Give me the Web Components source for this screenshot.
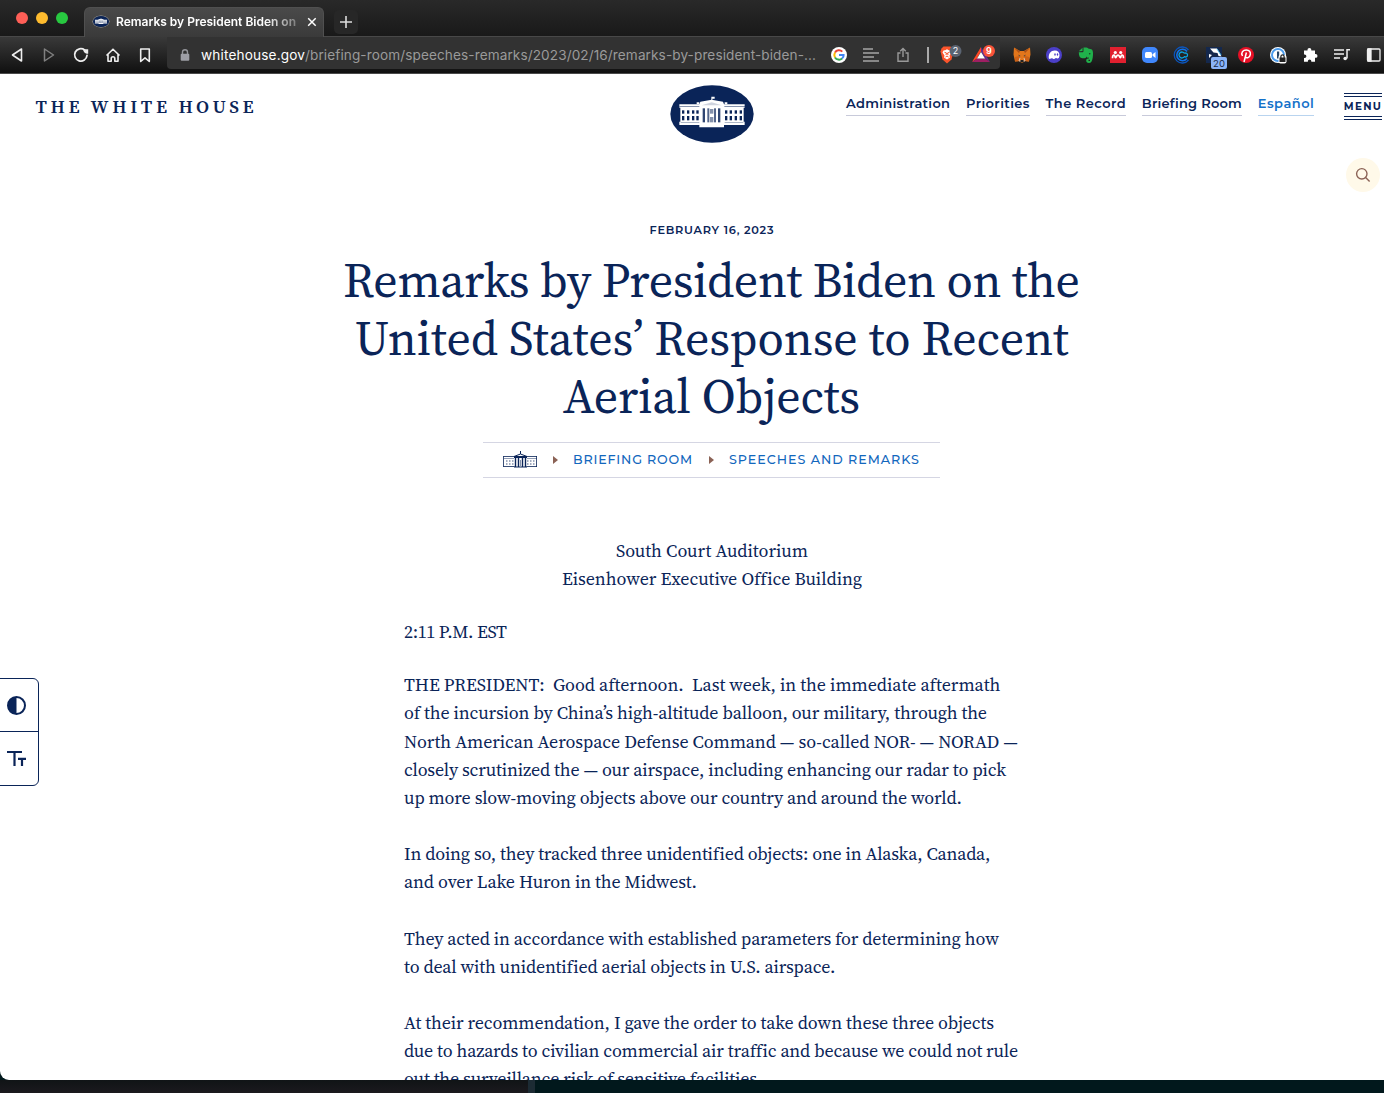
<!DOCTYPE html>
<html lang="en">
<head>
<meta charset="utf-8">
<title>Remarks by President Biden on the United States’ Response to Recent Aerial Objects</title>
<style>
html,body{margin:0;height:100%;overflow:hidden;background:#17161c}
body{--serif:'Source Serif 4','Source Serif Pro','Lora','Merriweather','Liberation Serif',serif}
</style>
</head>
<body>
<app-window></app-window>
<script>
const def = (name, html, after) => customElements.define(name, class extends HTMLElement {
  connectedCallback() {
    if (this.shadowRoot) return;
    const root = this.attachShadow({ mode: 'open' });
    root.innerHTML = typeof html === 'function' ? html(this) : html;
    if (after) after(this, root);
  }
});

// A single line of text, tracked to a requested measure.
def('fit-line', `<style>:host{display:block;white-space:pre;width:max-content}span{display:inline-block}</style><span><slot></slot></span>`,
  (el, root) => {
    const s = root.querySelector('span');
    const w = parseFloat(el.getAttribute('w'));
    s.style.letterSpacing = '0px';
    const natural = s.getBoundingClientRect().width;
    const n = el.textContent.length;
    const ls = (w - natural) / (n - 1);
    s.style.letterSpacing = ls + 'px';
    s.style.marginRight = -ls + 'px';
  });

const windows = () => {
  let r = '';
  for (const x of [96, 111, 126, 139, 225, 239, 254, 269])
    for (const y of [102, 119]) r += `<rect x="${x}" y="${y}" width="7" height="${y > 110 ? 13 : 10}"/>`;
  return r;
};
const building = (fg, bg) => `
<g fill="${fg}">
<path d="M88 84h60l3-8 34-6 34 6 3 8h62v10h-3v42h3v10h-62v7h-74v-7H88v-10h3V94h-3z"/>
<path d="M184 61h10v6h-7v6h-3zM140 78h8v6h-8zM224 78h8v6h-8z"/></g>
<g fill="${bg}">${windows()}
<rect x="88" y="89" width="60" height="1.500"/><rect x="223" y="89" width="62" height="1.500"/>
<path d="M155 87l30-9 30 9z" opacity=".2"/>
<rect x="158" y="96" width="7" height="42" opacity=".85"/><rect x="172" y="96" width="6" height="42" opacity=".7"/><rect x="192" y="96" width="6" height="42" opacity=".7"/><rect x="204" y="96" width="7" height="42" opacity=".85"/>
<rect x="180" y="98" width="10" height="14" opacity=".5"/><rect x="180" y="122" width="10" height="16" opacity=".5"/>
<rect x="92" y="138" width="56" height="2" opacity=".5"/><rect x="224" y="138" width="56" height="2" opacity=".5"/></g>`;

def('wh-emblem', `<style>:host{display:block;width:84px;height:58px}svg{display:block;width:100%;height:100%}</style>
<svg viewBox="60 26 252 174"><ellipse cx="186" cy="113" rx="125" ry="86" fill="#0a2458"/>${building('#fff', '#0a2458')}</svg>`);

def('wh-mini', `<style>:host{display:block;width:35px;height:17px;margin-top:-2px}svg{display:block;width:100%;height:100%}</style>
<svg viewBox="0 0 35 17" fill="none" stroke="#0a2458"><path d="M.5 5.500h11M23 5.500h11M.5 15.500h11M23.500 15.500h10.500M.5 5v11M33.500 5v11" stroke-width="1" opacity=".8"/>
<path d="M1 7.500h10M24 7.500h10" stroke-width="1" opacity=".45"/><path d="M3 10h8M24 10h8M3 13h8M24 13h8" stroke-width="1.500" opacity=".5" stroke-dasharray="1.500 1.500"/>
<path d="M11 5.500l6.500-2.500 6.500 2.500zM17.500 0v3M11 6.500h13M11 16h13" stroke-width="1"/><path d="M12.500 6v10M15.500 6v10M19.500 6v10M22.500 6v10" stroke-width="1.400"/><path d="M17.500 9v6" opacity=".5"/></svg>`);

def('tab-strip', `<style>
:host{display:flex;height:37px;background:linear-gradient(#292929,#191919);box-sizing:border-box;border-bottom:1px solid #484848;color:#fff;font:600 12px Inter,sans-serif}
.lights{display:flex;gap:8px;padding:12px 16px 0 16px;flex:none}
.lights i{width:12px;height:12px;border-radius:50%}
.tab{box-sizing:border-box;width:240px;height:30px;margin-top:7px;padding:0 6px 2px 8px;display:flex;align-items:center;border-radius:6px 6px 0 0;background:linear-gradient(#4a4a4a,#3a3a3a);border:1px solid #505050;border-bottom:0}
.tab wh-emblem{width:16px;height:11px;border-radius:50%;box-shadow:0 0 0 .5px #aaa}
.title{width:181px;margin-left:7px;overflow:hidden;-webkit-mask:linear-gradient(90deg,#000 82%,rgba(0,0,0,.3));mask:linear-gradient(90deg,#000 82%,rgba(0,0,0,.3));line-height:16px}
.x{margin-left:10px}.plus{width:24px;height:24px;margin:10px 0 0 10px;border-radius:5px;background:#272727;display:block}
</style>
<div class="lights"><i style="background:#fe5f57"></i><i style="background:#febb2e"></i><i style="background:#28c840"></i></div>
<div class="tab"><wh-emblem></wh-emblem><div class="title"><fit-line w="180">Remarks by President Biden on</fit-line></div>
<svg class="x" width="10" height="10" stroke="#fff" stroke-width="1.500"><path d="M1.200 1.200l7.500 7.500M8.700 1.200L1.200 8.700"/></svg></div>
<svg class="plus" viewBox="0 0 24 24" stroke="#ddd" stroke-width="1.600"><path d="M12 6v12M6 12h12"/></svg>`);

def('tool-bar', `<style>
:host{display:flex;align-items:center;height:37px;box-sizing:border-box;border-bottom:1px solid #4a4a4a;background:linear-gradient(#393939,#101010);color:#fff;font:13.600px Inter,Roboto,sans-serif}
svg{display:block;flex:none}
.nav{display:flex;gap:12px;padding-left:7px;width:160px;box-sizing:border-box}
.addr{display:flex;align-items:center;width:833px;box-sizing:border-box;height:32px;border-radius:0 0 4px 4px;background:#323232;align-self:flex-start;padding:4px 0 0 12px;margin-left:7px}
.url{display:flex;margin-left:10px;width:616px}
.path{color:#9a9a9a}
.in{display:flex;gap:12px;margin-left:12px}
.sep{width:1.500px;height:16px;background:#aaa;margin:0 11px 0 14px}
.sh{display:flex;gap:6px;margin-left:-2px}
.ext{display:flex;gap:12px;margin-left:12px}
text{font-family:Inter,sans-serif}
</style>
<div class="nav">
<svg width="20" height="20" fill="none" stroke="#eee" stroke-width="1.600"><path d="M14.500 4v12L5.500 10z" stroke-linejoin="round"/></svg>
<svg width="20" height="20" fill="none" stroke="#808080" stroke-width="1.500"><path d="M5.500 4v12l9-6z" stroke-linejoin="round"/></svg>
<svg width="20" height="20" fill="none" stroke="#eee" stroke-width="1.800"><path d="M13.600 4.900A6.200 6.200 0 1 0 16 10.500" stroke-linecap="round"/><path d="M12 4.200h5.200v4.500c-1.700 0-3-.5-3.800-1.300-.8-.8-1.200-1.900-1.400-3.200z" fill="#eee" stroke="none"/></svg>
<svg width="20" height="20" fill="none" stroke="#eee" stroke-width="1.600"><path d="M3.500 10.500L10 4.200l6.500 6.300M5 9.500v6.700h3.200v-2.700a1.800 1.800 0 0 1 3.600 0v2.700H15V9.500" stroke-linejoin="round"/></svg>
<svg width="20" height="20" fill="none" stroke="#eee" stroke-width="1.600"><path d="M5.700 4h8.600v12.500L10 12.800l-4.300 3.700z" stroke-linejoin="round"/></svg>
</div>
<div class="addr">
<svg width="12" height="14" fill="none"><path d="M3.500 7V4.300a2.500 2.500 0 0 1 5 0V7" stroke="#95969b" stroke-width="1.400"/><rect x="1.700" y="5.800" width="8.600" height="7" rx="1" fill="#9d9ea5"/></svg>
<div class="url"><fit-line w="104">whitehouse.gov</fit-line><fit-line class="path" w="511">/briefing-room/speeches-remarks/2023/02/16/remarks-by-president-biden-...</fit-line></div>
<div class="in">
<svg width="20" height="20" fill="none" stroke-width="2"><circle cx="10" cy="10" r="8" fill="#fff"/><path d="M13.300 6.600A4.700 4.700 0 0 0 6 7.600" stroke="#ea4335"/><path d="M6 7.600a4.700 4.700 0 0 0 0 4.800" stroke="#fbbc05"/><path d="M6 12.400a4.700 4.700 0 0 0 7.100 1.100" stroke="#34a853"/><path d="M13.100 13.500c1-.8 1.600-2 1.500-3.500H10" stroke="#4285f4"/></svg>
<svg width="20" height="20" stroke="#a5a5a5" stroke-width="1.500"><path d="M2 4h10M2 8h16M2 12h11M2 16h16"/></svg>
<svg width="20" height="20" fill="none" stroke="#999" stroke-width="1.400"><path d="M7.500 8H5v8.300h10V8h-2.500M10 12V3.500M7.200 6.200L10 3.500l2.800 2.700"/></svg>
</div><i class="sep"></i>
<div class="sh">
<svg width="24" height="22"><path d="M3.500 4.500l2-2h7l2 2 1 3-2 8L9 19.500 4.500 15.500l-2-8z" fill="#fb542b"/><path d="M5.500 6.500L8 6l1-1 1 1 2.500.5 1 2-2 3 .5 2-3 2-3-2 .5-2-2-3z" fill="#fff"/><path d="M6.500 8.300l2 .7-.5 2M11.500 8.300l-2 .7.5 2M7.500 13l1.500-1 1.500 1" stroke="#fb542b" fill="none"/><rect x="11.500" y="1" width="12" height="12" rx="6" fill="#5b6472"/><text x="17.500" y="10.200" text-anchor="middle" font-size="9" fill="#fff">2</text></svg>
<svg width="28" height="22"><g transform="translate(2 0)"><path d="M11 3L2 18l5-3.500 4-7.200z" fill="#ff4724"/><path d="M11 3l9 15-5-3.500-4-7.200z" fill="#662d91"/><path d="M2 18h18l-5-3.500H7z" fill="#9e1f63"/><path d="M11 8l4 6.500H7z" fill="#fff"/><rect x="13" y="1" width="12" height="12" rx="6" fill="#f9533a"/><text x="19" y="10.200" text-anchor="middle" font-size="9" font-weight="600" fill="#fff">9</text></g></svg>
</div></div>
<div class="ext">
<svg width="20" height="20"><path d="M2 2.500l6 3.500h4l6-3.500.5 7-1.500 7-4.500-.5-1.500 1.500H9L7.500 16 3 16.500l-1.500-7z" fill="#e2761b"/><path d="M2 3l5 5 1-2zM18 3l-5 5-1-2z" fill="#a85018"/><path d="M3 12l4-1 1 5-5 .5zM17 12l-4-1-1 5 5 .5z" fill="#cd6116"/><path d="M6 9.500l2.500 1.500-1 .5zM14 9.500L11.500 11l1 .5z" fill="#233447"/><path d="M8.500 15h3l.5 2H8z" fill="#222"/><path d="M8 13l-1 3h1.500M12 13l1 3h-1.500" stroke="#d7c1b3" fill="none"/></svg>
<svg width="20" height="20"><circle cx="10" cy="10" r="8" fill="#4b3fc8"/><path d="M4.800 13.500c-.5-5 2-8 6-8 3 0 4.700 2 4.700 4.700 0 2-.9 3.300-2 3.300-.8 0-1-.6-1.500-.6-.8 0-1.200 1.100-2.400 1.100-1 0-1.100-.7-1.800-.7-.9 0-1.700 1.200-3 .2z" fill="#fff"/><ellipse cx="11" cy="9.500" rx=".7" ry="1.200" fill="#4b3fc8"/><ellipse cx="13.500" cy="9.500" rx=".7" ry="1.200" fill="#4b3fc8"/></svg>
<svg width="20" height="20"><path d="M7.500 2.500h3c1.200 0 1.700 1 1.700 1l3 .7c1.800.4 2.300 4 1.500 8.500-.6 3.500-1.500 5.300-3.800 5.300-2 0-2.700-.9-2.700-2.500 0-1.300.8-2 2-2h.7l-.1-.9-1.500.1-.5-1.200c-.6 1.500-2 2-4.500 1.800-2.400-.2-3.500-2-3.500-6h4l.7-.8z" fill="#20b04b"/><path d="M2.800 6.300L6.500 2.700v3.200z" fill="#20b04b"/><circle cx="13.700" cy="8.700" r=".8" fill="#183d23"/><path d="M12.500 14.700h1.500v1.300h-1.500z" fill="#222"/></svg>
<svg width="20" height="20"><path d="M2 2h16v16H2z" fill="#e1202f"/><circle cx="7.300" cy="7.500" r="1.600" fill="#fff"/><circle cx="12.700" cy="7.500" r="1.600" fill="#fff"/><path d="M4.500 13.200c0-2 .5-3 1.500-3 1.500 0 .7 2.500 1.500 2.500S8.500 10.200 10 10.200s1.700 2.500 2.500 2.500 0-2.500 1.500-2.500c1 0 1.500 1 1.500 3" stroke="#fff" stroke-width="1.700" fill="none"/></svg>
<svg width="20" height="20"><rect x="2" y="2" width="16" height="16" rx="5" fill="#4087fc"/><rect x="5" y="7" width="7" height="6" rx="1.500" fill="#fff"/><path d="M12.500 9.300L15.500 7v6l-3-2.300z" fill="#fff"/></svg>
<svg width="20" height="20" fill="none"><path d="M16.500 5A8 8 0 1 0 16.500 15" stroke="#0b55bd" stroke-width="1.300"/><path d="M15 6.500A5.700 5.700 0 1 0 15 13.500" stroke="#1072ed" stroke-width="1.600"/><path d="M12.500 8.300a3 3 0 1 0 0 3.400c1.600.7 3 0 3-1.700s-1.400-2.400-3-1.700" stroke="#0ba5e5" stroke-width="1.300"/></svg>
<svg width="22" height="20" style="overflow:visible"><g transform="translate(0 -4)"><path d="M2 6h16v16H2z" fill="#14284d"/><path d="M6 7.500h7l4.500 8-3-.5-1-3-4-.5zM5 13l3 1-3 3z" fill="#fff"/><path d="M13 8l4 6" stroke="#58bff0"/><rect x="7" y="16" width="16" height="12" rx="2" fill="#8ab4f8"/><text x="15" y="25.500" text-anchor="middle" font-size="9.500" fill="#1b2c4b">20</text></g></svg>
<svg width="20" height="20" style="margin-left:-2px"><circle cx="10" cy="10" r="8" fill="#e60f25"/><path d="M10.400 7.500L8 17M6.500 11c-2-3.500.5-6 3.800-6 3 0 4.500 2 4 4.500-.6 3.500-3.800 4-4.900 2.300" stroke="#fff" stroke-width="1.500" fill="none"/></svg>
<svg width="20" height="20"><circle cx="10" cy="10" r="8" fill="#fff"/><circle cx="10" cy="10" r="6" fill="none" stroke="#4b9ced" stroke-width="2"/><path d="M9 6.500h2.200v7H9z" fill="#244466"/><rect x="10.500" y="10" width="8" height="8.500" rx="2" fill="#fff"/><path d="M11.500 12.500h6V17h-6z" fill="#222"/><path d="M12.900 13v-1.500a1.600 1.600 0 0 1 3.200 0V13" stroke="#222" stroke-width="1.200" fill="none"/></svg>
<svg width="20" height="20"><path d="M4 5.500h3.500v-.7a1.900 1.900 0 0 1 3.800 0v.7H15V9h.6a1.900 1.900 0 0 1 0 3.800H15v4h-3.700v-.7a1.700 1.700 0 0 0-3.400 0v.7H4V13h.7a1.700 1.700 0 0 0 0-3.400H4z" fill="#fff"/></svg>
<svg width="20" height="20" fill="none" stroke="#eee" stroke-width="1.500"><path d="M2 5h10M2 9h10M2 13h6M15 13.500V4.800h3"/><circle cx="13.200" cy="13.500" r="1.800" fill="#eee" stroke="none"/></svg>
<svg width="20" height="20" fill="none" stroke="#eee" stroke-width="1.300"><rect x="3.500" y="4" width="12.500" height="12" rx="1"/><path d="M4 4h3v12H4z" fill="#eee"/></svg>
</div>`);

def('nav-link', `<style>:host{display:block;color:var(--c,#0a2458);border-bottom:1px solid var(--b,#c8cada);height:24px;line-height:24px;font-weight:600}</style><slot></slot>`);

def('site-header', `<style>
:host{display:flex;height:106px;color:#0a2458;font:600 13px/24px Montserrat,Inter,sans-serif}
.brand{padding:21px 0 0 35.500px;font:600 18.500px/24px var(--serif);width:670px;box-sizing:border-box;flex:none}
wh-emblem{margin-top:11px;flex:none}
nav{display:flex;gap:16px;padding:17px 0 0 92px;flex:none}
.menu{box-sizing:border-box;width:38px;height:27px;border:solid #0a2458;border-style:double none;border-width:4px 0;margin:2px 0 0 14px;font-size:10.300px;font-weight:700;line-height:20px}
</style>
<div class="brand"><fit-line w="218">THE WHITE HOUSE</fit-line></div>
<wh-emblem></wh-emblem>
<nav><nav-link><fit-line w="104">Administration</fit-line></nav-link><nav-link><fit-line w="63.500">Priorities</fit-line></nav-link><nav-link><fit-line w="80.300">The Record</fit-line></nav-link><nav-link><fit-line w="100">Briefing Room</fit-line></nav-link><nav-link style="--c:#1471c9;--b:#b9d4ef"><fit-line w="56">Español</fit-line></nav-link>
<div class="menu"><fit-line w="37">MENU</fit-line></div></nav>`);

def('search-button', `<style>:host{position:absolute;left:1346px;top:84px;width:34px;height:34px;border-radius:50%;background:#fff9e9}svg{display:block}</style>
<svg width="34" height="34" fill="none" stroke="#8b6255" stroke-width="1.400"><circle cx="15.800" cy="15.800" r="5.200"/><path d="M19.600 19.600L23.600 23.600"/></svg>`);

def('access-panel', `<style>:host{position:absolute;left:-1px;top:604px;width:40px;height:108px;box-sizing:border-box;border:1px solid #0a2458;border-radius:0 6px 6px 0;background:#fff}div{height:52px}div+div{border-top:1px solid #0a2458}svg{display:block}</style>
<div><svg width="38" height="52" fill="none"><circle cx="16.500" cy="26.500" r="8.500" stroke="#0a2458" stroke-width="2"/><path d="M16.500 18a8.500 8.500 0 0 0 0 17z" fill="#0a2458"/></svg></div>
<div><svg width="38" height="52" fill="none" stroke="#0a2458" stroke-width="2.200"><path d="M7 20h15M14.500 20v14M18 26.800h8M22 26.800V34"/></svg></div>`);

def('page-headline', `<style>
:host{display:flex;flex-direction:column;align-items:center;color:#0a2458;font:48px/58px var(--serif);padding:42px 0 0 39px}
.date{font:600 11.300px/16px Montserrat,Inter,sans-serif;margin-bottom:13px}
</style>
<fit-line class="date" w="124">FEBRUARY 16, 2023</fit-line>
<fit-line w="737">Remarks by President Biden on the</fit-line>
<fit-line w="714">United States’ Response to Recent</fit-line>
<fit-line w="297">Aerial Objects</fit-line>`);

def('crumb-trail', `<style>
:host{display:flex;align-items:center;box-sizing:border-box;width:457px;height:36px;margin:17px 0 0 483px;padding-left:20px;border-top:1px solid #d5d6e3;border-bottom:1px solid #d5d6e3;color:#1267bd;font:550 12.700px/20px Montserrat,Inter,sans-serif}
i{width:0;border-left:5px solid #8b6255;border-top:4px solid transparent;border-bottom:4px solid transparent}
</style>
<wh-mini></wh-mini><i style="margin:0 15px"></i><fit-line w="119">BRIEFING ROOM</fit-line><i style="margin:0 15px 0 17px"></i><fit-line w="190">SPEECHES AND REMARKS</fit-line>`);

def('speech-par', `<style>:host{display:block;margin-bottom:var(--gap,28.200px)}</style><slot></slot>`);

const P = (gap, ...lines) => `<speech-par style="--gap:${gap}px">${lines.map(([t, w]) => `<fit-line w="${w}">${t}</fit-line>`).join('')}</speech-par>`;
def('speech-body', `<style>
:host{display:block;width:616px;margin:59px 0 0 404px;color:#0a2458;font:18px/28.200px var(--serif)}
.c{display:flex;flex-direction:column;align-items:center;margin-bottom:25px}
</style>
<div class="c"><fit-line w="192">South Court Auditorium</fit-line><fit-line w="298">Eisenhower Executive Office Building</fit-line></div>
${P(24.600, ['2:11 P.M. EST', 103])}
${P(28, ['THE PRESIDENT:  Good afternoon.  Last week, in the immediate aftermath', 595], ['of the incursion by China’s high-altitude balloon, our military, through the', 583], ['North American Aerospace Defense Command — so-called NOR- — NORAD —', 614], ['closely scrutinized the — our airspace, including enhancing our radar to pick', 602], ['up more slow-moving objects above our country and around the world.', 558])}
${P(28, ['In doing so, they tracked three unidentified objects: one in Alaska, Canada,', 585], ['and over Lake Huron in the Midwest.', 293])}
${P(28, ['They acted in accordance with established parameters for determining how', 595], ['to deal with unidentified aerial objects in U.S. airspace.', 430])}
${P(28, ['At their recommendation, I gave the order to take down these three objects', 590], ['due to hazards to civilian commercial air traffic and because we could not rule', 612], ['out the surveillance risk of sensitive facilities.', 358])}`);

def('web-page', `<style>:host{display:block;position:relative;height:1006px;overflow:hidden;background:#fff;border-bottom-left-radius:9px}</style>
<site-header></site-header><search-button></search-button>
<page-headline></page-headline><crumb-trail></crumb-trail><speech-body></speech-body><access-panel></access-panel>`);

def('app-window', `<style>
:host{display:block;height:1093px;background:linear-gradient(#101416,#1b191e) 0 1080px/528px 13px no-repeat,linear-gradient(#1c2b34,#1c2b34) 528px 1080px/7px 13px no-repeat,#01181c}
</style>
<tab-strip></tab-strip><tool-bar></tool-bar><web-page></web-page>`);
</script>
</body>
</html>
